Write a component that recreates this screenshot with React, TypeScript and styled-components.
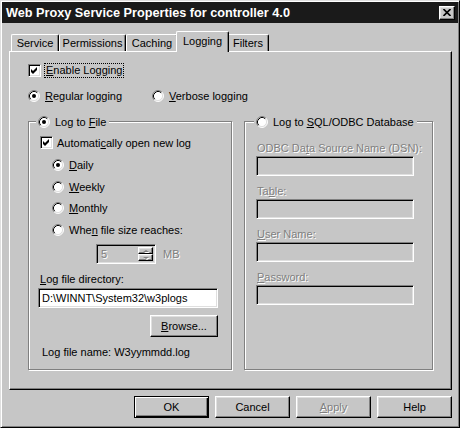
import React from 'react'
import styled, { createGlobalStyle, css } from 'styled-components'

const FACE = '#c6c6c6'

const GlobalStyle = createGlobalStyle`
  html, body {
    margin: 0;
    padding: 0;
    background: #ffffff;
  }
  body {
    font-family: 'Liberation Sans', Arial, sans-serif;
    font-size: 11px;
    color: #000000;
  }
`

/* classic 3D edges */
const sunken = css`
  box-sizing: border-box;
  border: 1px solid;
  border-color: #808080 #ffffff #ffffff #808080;
  box-shadow: inset 1px 1px 0 #000000, inset -1px -1px 0 #dfdfdf;
`

const raised = css`
  box-sizing: border-box;
  border: 1px solid;
  border-color: #ffffff #000000 #000000 #ffffff;
  box-shadow: inset -1px -1px 0 #808080, inset 1px 1px 0 #dfdfdf;
`

const Window = styled.div`
  box-sizing: border-box;
  width: 460px;
  height: 428px;
  background: ${FACE};
  border: 1px solid;
  border-color: #dfdfdf #000000 #000000 #dfdfdf;
  box-shadow: inset 1px 1px 0 #ffffff, inset -1px -1px 0 #808080;
  padding: 1px;
  display: flex;
  flex-direction: column;
`

const TitleBar = styled.div`
  height: 21px;
  background: #1a1a1a;
  display: flex;
  align-items: center;
  justify-content: space-between;
  padding: 0 3px 0 4px;
`

const TitleText = styled.span`
  color: #ffffff;
  font-weight: bold;
  font-size: 12.7px;
`

const CloseBox = styled.div`
  ${raised};
  width: 16px;
  height: 14px;
  background: ${FACE};
  display: flex;
  align-items: center;
  justify-content: center;
`

const TabStrip = styled.div`
  display: flex;
  align-items: flex-end;
  height: 20px;
  margin-top: 8px;
  padding-left: 9px;
`

const Tab = styled.div<{ $w: number; $active?: boolean }>`
  position: relative;
  box-sizing: border-box;
  width: ${(p) => p.$w + (p.$active ? 4 : 0)}px;
  height: ${(p) => (p.$active ? 21 : 17)}px;
  margin: 0 ${(p) => (p.$active ? -2 : 0)}px ${(p) => (p.$active ? -1 : 0)}px;
  z-index: ${(p) => (p.$active ? 2 : 1)};
  background: ${FACE};
  border-top: 1px solid #ffffff;
  border-left: 1px solid #ffffff;
  border-right: 1px solid #000000;
  box-shadow: inset -1px 0 0 #808080;
  border-radius: 2px 2px 0 0;
  display: flex;
  align-items: center;
  justify-content: center;
  padding-bottom: ${(p) => (p.$active ? 2 : 0)}px;
`

const Panel = styled.div`
  box-sizing: border-box;
  width: 443px;
  height: 339px;
  margin-left: 7px;
  border: 1px solid;
  border-color: #ffffff #000000 #000000 #ffffff;
  box-shadow: inset -1px -1px 0 #808080;
  padding: 11px 18px 19px 18px;
  display: flex;
  flex-direction: column;
`

const Row = styled.div<{ $mt?: number; $ml?: number }>`
  display: flex;
  align-items: center;
  height: 15px;
  margin-top: ${(p) => p.$mt ?? 0}px;
  margin-left: ${(p) => p.$ml ?? 0}px;
  white-space: nowrap;
`

const Choice = styled.label<{ $w?: number; $gap?: number }>`
  display: flex;
  align-items: center;
  gap: ${(p) => p.$gap ?? 5}px;
  width: ${(p) => (p.$w ? `${p.$w}px` : 'auto')};
`

const Key = styled.span`
  text-decoration: underline;
  text-underline-offset: 1px;
`

const Focus = styled.span`
  border: 1px dotted #000000;
  padding: 0 1px;
  line-height: 13px;
`

const Muted = styled.span`
  color: #808080;
  text-shadow: 1px 1px 0 #ffffff;
`

const CheckBox = styled.span`
  ${sunken};
  width: 13px;
  height: 13px;
  background: #ffffff;
  display: flex;
  align-items: center;
  justify-content: center;
  flex: none;
`

const Groups = styled.div`
  display: flex;
  gap: 12px;
  margin-top: 11px;
  flex: 1;
`

const Group = styled.fieldset<{ $w: number; $pl: number; $pr: number }>`
  box-sizing: border-box;
  width: ${(p) => p.$w}px;
  min-width: 0;
  margin: 0;
  padding: 0 ${(p) => p.$pr}px 0 ${(p) => p.$pl}px;
  border: 1px solid #808080;
  box-shadow: inset 1px 1px 0 #ffffff, 1px 1px 0 #ffffff;
  display: flex;
  flex-direction: column;
`

const Legend = styled.legend`
  display: flex;
  align-items: center;
  height: 15px;
  padding: 0 3px 0 2px;
  margin-left: -3px;
  background: ${FACE};
`

const TextBox = styled.div<{ $w: number; $mt?: number; $ml?: number; $disabled?: boolean }>`
  ${sunken};
  width: ${(p) => p.$w}px;
  height: 20px;
  margin-top: ${(p) => p.$mt ?? 0}px;
  margin-left: ${(p) => p.$ml ?? 0}px;
  background: ${(p) => (p.$disabled ? FACE : '#ffffff')};
  padding: 0 3px;
  display: flex;
  align-items: center;
  white-space: nowrap;
`

const SpinRow = styled.div`
  display: flex;
  align-items: center;
  gap: 7px;
  margin-top: 7px;
  margin-left: 57px;
`

const SpinBox = styled.div`
  ${sunken};
  width: 60px;
  height: 20px;
  background: ${FACE};
  display: flex;
  align-items: stretch;
  padding: 2px 2px 2px 4px;
`

const SpinValue = styled(Muted)`
  flex: 1;
  display: flex;
  align-items: center;
`

const SpinButtons = styled.div`
  display: flex;
  flex-direction: column;
  width: 15px;
`

const SpinHalf = styled.div`
  ${raised};
  flex: 1;
  background: ${FACE};
  display: flex;
  align-items: center;
  justify-content: center;
`

const Arrow = styled.span<{ $up?: boolean }>`
  width: 0;
  height: 0;
  border-left: 3px solid transparent;
  border-right: 3px solid transparent;
  ${(p) =>
    p.$up
      ? 'border-bottom: 2px solid #808080;'
      : 'border-top: 2px solid #808080;'}
  filter: drop-shadow(1px 1px 0 #ffffff);
`

const Button = styled.div<{ $w: number; $h?: number; $default?: boolean; $mt?: number }>`
  box-sizing: border-box;
  width: ${(p) => p.$w}px;
  height: ${(p) => p.$h ?? 22}px;
  margin-top: ${(p) => p.$mt ?? 0}px;
  background: ${FACE};
  display: flex;
  align-items: center;
  justify-content: center;
  border: 1px solid;
  ${(p) =>
    p.$default
      ? css`
          border-color: #000000;
          box-shadow: inset 1px 1px 0 #ffffff, inset -1px -1px 0 #000000,
            inset -2px -2px 0 #808080;
        `
      : css`
          border-color: #ffffff #000000 #000000 #ffffff;
          box-shadow: inset -1px -1px 0 #808080, inset 1px 1px 0 #dfdfdf;
        `}
`

const BrowseRow = styled.div`
  display: flex;
  justify-content: flex-end;
  margin-top: 7px;
`

const ButtonRow = styled.div`
  display: flex;
  justify-content: flex-end;
  gap: 6px;
  margin-top: 6px;
  padding-right: 6px;
`

const FieldLabel = styled.div<{ $mt?: number; $ml?: number }>`
  height: 14px;
  display: flex;
  align-items: center;
  margin-top: ${(p) => p.$mt ?? 0}px;
  margin-left: ${(p) => p.$ml ?? 0}px;
  white-space: nowrap;
`

function Check({ checked }: { checked?: boolean }) {
  return (
    <CheckBox>
      {checked && (
        <svg width="9" height="9" viewBox="0 0 9 9">
          <polygon points="1,3 3,5 7,1 7,4 3,8 1,6" fill="#000000" />
        </svg>
      )}
    </CheckBox>
  )
}

function Radio({ checked }: { checked?: boolean }) {
  return (
    <svg width="12" height="12" viewBox="0 0 12 12" style={{ flex: 'none' }}>
      <circle cx="6" cy="6" r="5" fill="#ffffff" />
      <path d="M2.11 9.89 A5.5 5.5 0 0 1 9.89 2.11" stroke="#808080" fill="none" />
      <path d="M9.89 2.11 A5.5 5.5 0 0 1 2.11 9.89" stroke="#ffffff" fill="none" />
      <path d="M2.82 9.18 A4.5 4.5 0 0 1 9.18 2.82" stroke="#000000" fill="none" />
      <path d="M9.18 2.82 A4.5 4.5 0 0 1 2.82 9.18" stroke="#dfdfdf" fill="none" />
      {checked && <circle cx="6" cy="6" r="2" fill="#000000" />}
    </svg>
  )
}

export default function App() {
  return (
    <>
      <GlobalStyle />
      <Window>
        <TitleBar>
          <TitleText>Web Proxy Service Properties for controller 4.0</TitleText>
          <CloseBox>
            <svg width="8" height="7" viewBox="0 0 8 7">
              <path d="M0.5 0 L7.5 7 M7.5 0 L0.5 7" stroke="#000000" strokeWidth="1.6" />
            </svg>
          </CloseBox>
        </TitleBar>

        <TabStrip>
          <Tab $w={48}>Service</Tab>
          <Tab $w={67}>Permissions</Tab>
          <Tab $w={52}>Caching</Tab>
          <Tab $w={49} $active>
            Logging
          </Tab>
          <Tab $w={42}>Filters</Tab>
        </TabStrip>

        <Panel>
          <Row>
            <Choice $gap={3}>
              <Check checked />
              <Focus>
                <Key>E</Key>nable Logging
              </Focus>
            </Choice>
          </Row>

          <Row $mt={10}>
            <Choice $w={124}>
              <Radio checked />
              <span>
                <Key>R</Key>egular logging
              </span>
            </Choice>
            <Choice>
              <Radio />
              <span>
                <Key>V</Key>erbose logging
              </span>
            </Choice>
          </Row>

          <Groups>
            <Group $w={204} $pl={10} $pr={13}>
              <Legend>
                <Choice>
                  <Radio checked />
                  <span>
                    Log to <Key>F</Key>ile
                  </span>
                </Choice>
              </Legend>

              <Row $mt={6} $ml={1}>
                <Choice $gap={4}>
                  <Check checked />
                  <span>
                    Automati<Key>c</Key>ally open new log
                  </span>
                </Choice>
              </Row>
              <Row $mt={7} $ml={13}>
                <Choice>
                  <Radio checked />
                  <span>
                    <Key>D</Key>aily
                  </span>
                </Choice>
              </Row>
              <Row $mt={7} $ml={13}>
                <Choice>
                  <Radio />
                  <span>
                    <Key>W</Key>eekly
                  </span>
                </Choice>
              </Row>
              <Row $mt={6} $ml={13}>
                <Choice>
                  <Radio />
                  <span>
                    <Key>M</Key>onthly
                  </span>
                </Choice>
              </Row>
              <Row $mt={7} $ml={13}>
                <Choice>
                  <Radio />
                  <span>
                    Whe<Key>n</Key> file size reaches:
                  </span>
                </Choice>
              </Row>

              <SpinRow>
                <SpinBox>
                  <SpinValue>5</SpinValue>
                  <SpinButtons>
                    <SpinHalf>
                      <Arrow $up />
                    </SpinHalf>
                    <SpinHalf>
                      <Arrow />
                    </SpinHalf>
                  </SpinButtons>
                </SpinBox>
                <Muted>MB</Muted>
              </SpinRow>

              <FieldLabel $mt={8} $ml={1}>
                <span>
                  <Key>L</Key>og file directory:
                </span>
              </FieldLabel>
              <TextBox $w={180} $mt={2} $ml={-1}>
                D:\WINNT\System32\w3plogs
              </TextBox>

              <BrowseRow>
                <Button $w={68}>
                  <span>
                    <Key>B</Key>rowse...
                  </span>
                </Button>
              </BrowseRow>

              <FieldLabel $mt={8} $ml={3}>
                Log file name: W3yymmdd.log
              </FieldLabel>
            </Group>

            <Group $w={189} $pl={12} $pr={12}>
              <Legend>
                <Choice>
                  <Radio />
                  <span>
                    Log to <Key>S</Key>QL/ODBC Database
                  </span>
                </Choice>
              </Legend>

              <FieldLabel $mt={12}>
                <Muted>
                  ODBC Da<Key>t</Key>a Source Name (DSN):
                </Muted>
              </FieldLabel>
              <TextBox $w={158} $mt={1} $ml={-1} $disabled />

              <FieldLabel $mt={8}>
                <Muted>
                  Ta<Key>b</Key>le:
                </Muted>
              </FieldLabel>
              <TextBox $w={158} $mt={1} $ml={-1} $disabled />

              <FieldLabel $mt={8}>
                <Muted>
                  <Key>U</Key>ser Name:
                </Muted>
              </FieldLabel>
              <TextBox $w={158} $mt={1} $ml={-1} $disabled />

              <FieldLabel $mt={8}>
                <Muted>
                  <Key>P</Key>assword:
                </Muted>
              </FieldLabel>
              <TextBox $w={158} $mt={1} $ml={-1} $disabled />
            </Group>
          </Groups>
        </Panel>

        <ButtonRow>
          <Button $w={75} $default>
            OK
          </Button>
          <Button $w={75}>Cancel</Button>
          <Button $w={75}>
            <Muted>
              <Key>A</Key>pply
            </Muted>
          </Button>
          <Button $w={75}>Help</Button>
        </ButtonRow>
      </Window>
    </>
  )
}
